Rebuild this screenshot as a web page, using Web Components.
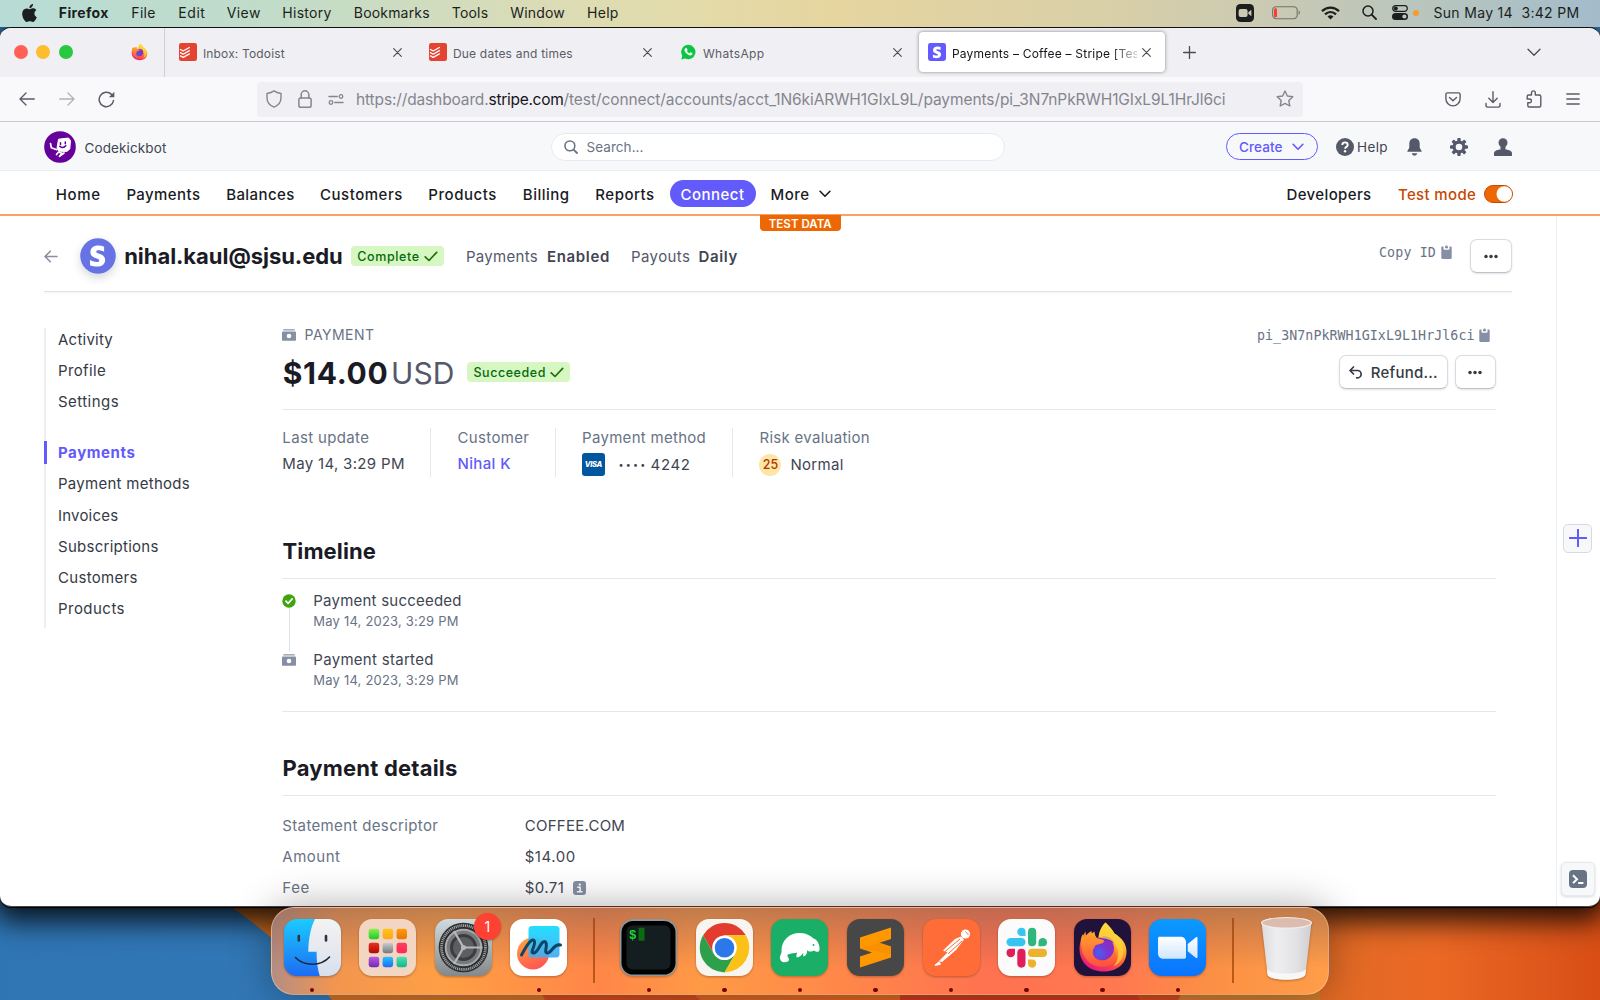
<!DOCTYPE html>
<html lang="en">
<head>
<meta charset="utf-8">
<title>Payments – Coffee – Stripe [Test]</title>
<style>
html,body{margin:0;height:1000px;width:1600px;overflow:hidden}
body{font-family:Inter,"Liberation Sans",sans-serif;color:#414552;font-size:15px}
</style>
</head>
<body>
<desk-top>
  <mac-menubar></mac-menubar>
  <browser-window>
    <browser-tabs slot="tabs"></browser-tabs>
    <browser-toolbar slot="toolbar"></browser-toolbar>
    <dash-board></dash-board>
  </browser-window>
  <mac-dock></mac-dock>
</desk-top>
<script>
const svg=(w,h,vb,body,extra='')=>`<svg xmlns="http://www.w3.org/2000/svg" width="${w}" height="${h}" viewBox="${vb}" fill="none" ${extra}>${body}</svg>`;
const line='stroke="currentColor" stroke-linecap="round" stroke-linejoin="round"';
const firefoxArt=`<defs>
<linearGradient id="ffa" x1=".8" y1="0" x2=".25" y2="1"><stop offset="0" stop-color="#fff14a"/><stop offset=".35" stop-color="#ffb52e"/><stop offset=".62" stop-color="#ff5a36"/><stop offset="1" stop-color="#e3128b"/></linearGradient>
<radialGradient id="ffb" cx=".35" cy=".7" r=".8"><stop offset="0" stop-color="#4a5cf0"/><stop offset=".5" stop-color="#7a35cf"/><stop offset="1" stop-color="#a026b4"/></radialGradient>
<linearGradient id="ffc" x1="0" y1="0" x2="0" y2="1"><stop offset="0" stop-color="#ffa62b"/><stop offset="1" stop-color="#ff4f3f"/></linearGradient></defs>
<path d="M28 2C31 5 34 8 37 13C44 17 49 23 49 31C49 44 39 51 26 51C12 51 2 42 2 28C2 22 4 17 8 11C8 14 9 16 10 17C12 15 14 13 17 11C17 14 18 16 20 18L21 17C22 10 24 6 28 2Z" fill="url(#ffa)"/>
<circle cx="25" cy="28" r="11.5" fill="url(#ffb)"/>
<path d="M5 14C6 15 6.500 16 7 17C9 14 11 12 14 10.500C14 13 15 15 17 17L26 19.500C27 21 26 22.500 24 23C21 24 17 24 17 27C14 30 15 37 20 39.500C25 42 34 40 37 30C40 36 39 42 31 45C18 50 5 40 4 27C3 21 3 18 5 14Z" fill="url(#ffc)"/>
<path d="M25 16C30 15 35 18 37 23C34 21 31 20 28 20Z" fill="#6a2cc4"/>
<path d="M28 2C31 5 34 8 37 13C43 17 46 23 46 31C46 38 42 43 36 46C42 39 42 30 37 23C33 18 26 18 21 17C22 10 24 6 28 2Z" fill="#ffd43b" opacity=".75"/>`;
const todoist=svg(18,18,'0 0 18 18','<rect width="18" height="18" rx="2.2" fill="#e44332"/><g stroke="#fff" stroke-width="1.3" stroke-linejoin="round"><path d="M1 6.2L4.2 8L10.8 4.2M1 9.4L4.2 11.2L10.8 7.4M1 12.6L4.2 14.4L10.8 10.6"/></g>');
const ICONS={
apple:svg(15,18,'3.9 2 16.2 20','<path fill="#1c1e1e" d="M18.71 19.5c-.83 1.24-1.71 2.45-3.05 2.47-1.34.03-1.77-.79-3.29-.79-1.53 0-2 .77-3.27.82-1.31.05-2.3-1.32-3.14-2.53C4.25 17 2.94 12.45 4.7 9.39c.87-1.52 2.43-2.48 4.12-2.51 1.28-.02 2.5.87 3.29.87.78 0 2.26-1.07 3.81-.91.65.03 2.47.26 3.64 1.98-.09.06-2.17 1.28-2.15 3.81.03 3.02 2.65 4.03 2.68 4.04-.03.07-.42 1.44-1.38 2.83M13 3.5c.73-.83 1.94-1.46 2.94-1.5.13 1.17-.34 2.35-1.04 3.19-.69.85-1.83 1.51-2.95 1.42-.15-1.15.41-2.35 1.05-3.11z"/>'),
record:svg(18,18,'0 0 18 18','<rect width="18" height="18" rx="4.5" fill="#1c1e1e"/><rect x="2.600" y="5" width="9" height="8" rx="2" fill="#c9c9b4"/><path d="M12.300 8.3L15.400 5.800v6.400l-3.100-2.500z" fill="#c9c9b4"/>'),
battery:svg(29,14,'0 0 29 14','<rect x=".6" y=".7" width="24.6" height="12" rx="3.6" stroke="#6f7468" stroke-width="1.1"/><rect x="2" y="2.2" width="3" height="9" rx="1.2" fill="#ff3b30"/><path d="M26.6 4.6c1.8.6 1.8 3.6 0 4.2z" fill="#6f7468"/>'),
wifi:svg(19,14,'0 0 19 14','<g stroke="#1c1e1e" stroke-width="2.3"><path d="M1 5.2C6 .4 13 .4 18 5.2M4 8.3c3.3-3 7.700-3 11 0"/></g><path d="M9.500 13.600L6.500 10.600a4.300 4.300 0 0 1 6 0z" fill="#1c1e1e"/>'),
spot:svg(15,15,'0 0 15 15','<circle cx="6" cy="6" r="5" stroke="#1c1e1e" stroke-width="1.500"/><path d="M9.700 9.700L14 14" stroke="#1c1e1e" stroke-width="1.800" stroke-linecap="round"/>'),
control:svg(16,15,'0 0 16 15','<rect x=".7" y=".7" width="14.600" height="5.600" rx="2.800" stroke="#1c1e1e" stroke-width="1.200"/><circle cx="3.800" cy="3.500" r="2" fill="#1c1e1e"/><rect y="8" width="16" height="7" rx="3.500" fill="#1c1e1e"/><circle cx="12.400" cy="11.500" r="2.100" fill="#b8c4bc"/>'),
firefox:svg(17,18,'0 0 51 53',firefoxArt),
todoist,
whatsapp:svg(15,16,'0 0 24 25','<path d="M12 1a11.500 11.500 0 1 1-5.500 21.800L.5 24.500L2 18.400A11.500 11.500 0 0 1 12 1z" fill="#0ac443"/><path fill="#fff" d="M17.472 14.382c-.297-.149-1.758-.867-2.030-.967-.273-.099-.471-.148-.67.15-.197.297-.767.966-.94 1.164-.173.199-.347.223-.644.075-.297-.15-1.255-.463-2.390-1.475-.883-.788-1.480-1.761-1.653-2.059-.173-.297-.018-.458.13-.606.134-.133.298-.347.446-.52.149-.174.198-.298.298-.497.099-.198.05-.371-.025-.52-.075-.149-.669-1.612-.916-2.207-.242-.579-.487-.5-.669-.51-.173-.008-.371-.01-.57-.01-.198 0-.52.074-.792.372-.272.297-1.040 1.016-1.040 2.479 0 1.462 1.065 2.875 1.213 3.074.149.198 2.096 3.200 5.077 4.487.709.306 1.262.489 1.694.625.712.227 1.360.195 1.871.118.571-.085 1.758-.719 2.006-1.413.248-.694.248-1.289.173-1.413-.074-.124-.272-.198-.57-.347" stroke="#fff" stroke-width=".8"/>'),
stripe:svg(18,18,'0 0 18 18','<rect width="18" height="18" rx="2.400" fill="#635bff"/><path fill="#fff" d="M8.200 7c0-.6.5-.8 1.200-.8 1 0 2.200.3 3.200.85V4.050A8.500 8.500 0 0 0 9.400 3.450C6.700 3.450 5 4.850 5 7.150c0 3.600 4.900 3 4.900 4.550 0 .7-.6.9-1.400.9-1.200 0-2.600-.5-3.600-1.100v3c1.200.5 2.500.8 3.600.8 2.700 0 4.600-1.300 4.600-3.700C13.100 7.800 8.200 8.500 8.200 7z"/>'),
close:svg(9,9,'0 0 9 9',`<path d="M.7.7l7.600 7.600M8.300.7L.7 8.300" ${line} stroke-width="1.150"/>`),
plus:svg(13,13,'0 0 13 13',`<path d="M6.500.6v11.800M.6 6.500h11.800" ${line} stroke-width="1.300"/>`),
down:svg(14,9,'0 0 14 9',`<path d="M1 1.200l6 6 6-6" ${line} stroke-width="1.300"/>`),
back:svg(16,14,'0 0 16 14',`<path d="M7 1L1 7l6 6M1.200 7H15.300" ${line} stroke-width="1.400"/>`),
fwd:svg(16,14,'0 0 16 14',`<path d="M9 1l6 6-6 6M14.800 7H.7" ${line} stroke-width="1.300"/>`),
reload:svg(17,17,'0 0 17 17',`<path d="M15.500 9.500A7.200 7.200 0 1 1 13.500 3.400L15 4.800" ${line} stroke-width="1.500"/><path d="M16.300.8v5.400h-5.400z" fill="currentColor"/>`),
shield:svg(16,18,'0 0 16 18',`<path d="M8 .9c2 1.400 4.500 2.200 7 2.600v4.300c0 4.200-2.600 7.600-7 9.300-4.400-1.700-7-5.100-7-9.300V3.500C3.500 3.100 6 2.300 8 .9z" ${line} stroke-width="1.400"/>`),
lock:svg(14,18,'0 0 14 18',`<rect x=".9" y="8" width="12.200" height="9.200" rx="1.800" ${line} stroke-width="1.500"/><path d="M3.200 8V4.600a3.800 3.800 0 0 1 7.600 0V8" ${line} stroke-width="1.500"/>`),
perms:svg(16,11,'0 0 16 11',`<path d="M1 2.500h8.200M15 8.500H6.800" ${line} stroke-width="1.500"/><circle cx="13" cy="2.500" r="1.800" ${line} stroke-width="1.300"/><circle cx="3" cy="8.500" r="1.800" ${line} stroke-width="1.300"/>`),
star:svg(18,18,'0 0 18 18',`<path d="M9 1l2.350 5 5.450.7-4 3.800 1 5.500L9 13.350 4.200 16l1-5.500-4-3.800 5.450-.7z" ${line} stroke-width="1.400"/>`),
pocket:svg(16,15,'0 0 16 15',`<path d="M2.500.9h11c.9 0 1.600.7 1.600 1.600v4.300a7.100 7.100 0 0 1-14.200 0V2.500C.9 1.600 1.600.9 2.500.9zM4.500 5.500L8 8.800l3.500-3.300" ${line} stroke-width="1.400"/>`),
download:svg(16,17,'0 0 16 17',`<path d="M8 .8v10.500M3.800 7.300L8 11.400l4.200-4.100M1 12.500v1.800c0 1 .8 1.800 1.800 1.800h10.400c1 0 1.800-.8 1.800-1.800v-1.800" ${line} stroke-width="1.400"/>`),
puzzle:svg(16,18,'0 0 16 18',`<path d="M2.500 5h3V2.800a1.900 1.900 0 0 1 3.800 0V5h4c.8 0 1.500.7 1.500 1.500v9c0 .8-.7 1.500-1.500 1.500h-10c-.8 0-1.500-.7-1.500-1.500v-2.700H3.500a1.900 1.900 0 0 0 0-3.800H1.200V6.500C1.200 5.700 1.700 5 2.500 5z" ${line} stroke-width="1.400"/>`),
burger:svg(14,12,'0 0 14 12',`<path d="M.8 1h12.400M.8 6h12.400M.8 11h12.400" ${line} stroke-width="1.300"/>`),
bot:svg(32,32,'0 0 32 32','<circle cx="16" cy="16" r="15.800" fill="#65009b"/><path d="M14.500 8.200L24.500 7l2 2.500-.7 8.500-3 2.500-7.800-.3-2-3z" fill="#fff" stroke="#fff" stroke-linejoin="round"/><path d="M16.500 11.800v1.700M21.300 11v1.700M15.800 15.300c2 1.500 4.500 1.200 6-.5" stroke="#65009b" stroke-width="1.500" stroke-linecap="round"/><path d="M6.500 12.500l.8 4.200 5.500 2M12.500 23.500l2-2.500 3.500 1.300-2.500 3 4.500-3.300" stroke="#fff" stroke-width="1.700" stroke-linecap="round" stroke-linejoin="round"/>'),
search:svg(14,14,'0 0 14 14','<circle cx="5.900" cy="5.900" r="4.900" stroke="#687385" stroke-width="1.600"/><path d="M9.600 9.600L13 13" stroke="#687385" stroke-width="1.800" stroke-linecap="round"/>'),
chev:svg(12,8,'0 0 12 8',`<path d="M1.100 1.300L6 6.300l4.900-5" ${line} stroke-width="1.600"/>`),
help:svg(18,18,'0 0 18 18','<circle cx="9" cy="9" r="9" fill="#545969"/><path d="M6.300 6.900C6.300 5.400 7.500 4.400 9 4.400s2.700 1 2.700 2.500c0 2-2.600 1.900-2.600 3.800" stroke="#fff" stroke-width="1.900"/><circle cx="9.100" cy="13.300" r="1.200" fill="#fff"/>'),
bell:svg(15,18,'0 0 15 18','<path d="M7.500.3C4.300.3 2.300 2.600 2.300 5.500v3.800C2.300 11 .3 12 .3 13.700h14.400c0-1.700-2-2.700-2-4.400V5.500c0-2.900-2-5.200-5.200-5.200zM4.800 15.200h5.400c-.3 1.500-1.400 2.400-2.700 2.400s-2.400-.9-2.700-2.400z" fill="#545969"/>'),
gear:svg(18,18,'-9 -9 18 18','<g fill="#545969">'+[0,45,90,135].map(a=>`<rect x="-1.700" y="-9" width="3.400" height="18" rx=".9" transform="rotate(${a})"/>`).join('')+'<circle r="6.500"/></g><circle r="3.300" fill="#f7f8fa"/>'),
person:svg(18,18,'0 0 18 18','<circle cx="9" cy="4.700" r="4.500" fill="#545969"/><path d="M0 17.500v-2.300c0-2.300 3.700-3.900 9-3.900s9 1.600 9 3.900v2.300c0 .3-.2.5-.5.5H.5c-.3 0-.5-.2-.5-.5zM6.500 8h5v4h-5z" fill="#545969"/>'),
toggle:svg(29,18,'0 0 29 18','<rect x=".5" y=".5" width="28" height="17" rx="8.500" fill="#ed6804" stroke="#c84801"/><circle cx="20.300" cy="9" r="7.800" fill="#fff"/>'),
arrow:svg(14,13,'0 0 14 13',`<path d="M6.300 1.200L1 6.500l5.300 5.300M1.200 6.500H13" ${line} stroke-width="1.600"/>`),
acct:svg(36,36,'0 0 36 36','<circle cx="18" cy="18" r="17.800" fill="#6772e5"/><path fill="#fff" d="M16.300 13.700c0-1 .8-1.400 2-1.400 1.800 0 4 .5 5.800 1.500V8.700a15 15 0 0 0-5.800-1.100c-4.800 0-7.900 2.500-7.900 6.700 0 6.500 8.900 5.400 8.900 8.200 0 1.200-1 1.600-2.400 1.600-2.100 0-4.800-.9-6.900-2v5.100c2.300 1 4.700 1.400 6.900 1.400 4.900 0 8.200-2.300 8.200-6.600-.1-7-8.800-5.700-8.800-8.300z"/>'),
check:svg(14,11,'0 0 14 11','<path d="M1.200 5.800L5 9.500 12.700 1.300" stroke="#217005" stroke-width="1.700" stroke-linecap="round" stroke-linejoin="round"/>'),
clip:svg(11,14,'0 0 11 14','<path d="M.3 2.600c0-.6.400-1 1-1h1.200v2.200c0 .5.400.900.900.900h4.200c.5 0 .9-.4.900-.9v-2.200h1.200c.6 0 1 .4 1 1V13c0 .5-.4.900-1 .900H1.300c-.6 0-1-.4-1-.9z" fill="#878fa4"/><path d="M4 3.300V1.900h.1a1.400 1.400 0 0 1 2.800 0H7v1.400z" fill="#878fa4"/>'),
dots:svg(14,5,'0 0 14 5','<g fill="#353a44"><circle cx="2" cy="2.500" r="1.750"/><circle cx="7" cy="2.500" r="1.750"/><circle cx="12" cy="2.500" r="1.750"/></g>'),
cash:svg(14,12,'0 0 14 12','<path d="M1.300 0h11.400v1.600H1.300z" fill="#a3acba"/><rect y="2.400" width="14" height="9.300" rx=".8" fill="#878fa4"/><circle cx="7" cy="7" r="2.300" fill="#fff"/>'),
refund:svg(13,13,'0 0 13 13',`<path d="M4.500 1L1 4.500 4.500 8M1.200 4.500h7.300a3.600 3.600 0 0 1 0 7.300H7.700" ${line} stroke-width="1.700"/>`),
ok:svg(14,14,'0 0 14 14','<circle cx="7" cy="7" r="6.700" fill="#3fa40d"/><path d="M4 7.200l2.100 2.100 4-4.300" stroke="#fff" stroke-width="1.800" stroke-linecap="round" stroke-linejoin="round"/>'),
info:svg(13,14,'0 0 13 14','<rect width="13" height="14" rx="3" fill="#878fa4"/><path d="M4.200 6.300h2.900v4.400M3.900 10.700h5.600" stroke="#fff" stroke-width="1.500"/><circle cx="6.800" cy="3.600" r="1.150" fill="#fff"/>'),
add:svg(18,18,'0 0 18 18','<path d="M9 .7v16.600M.7 9h16.600" stroke="#625afa" stroke-width="2" stroke-linecap="round"/>'),
term:svg(18,18,'0 0 18 18','<rect width="18" height="18" rx="4" fill="#687385"/><path d="M4 5.300l4 3.900-4 3.900" stroke="#fff" stroke-width="2"/><path d="M9.200 13h5.200" stroke="#fff" stroke-width="2"/>')
};
const app=(body)=>svg(57,57,'0 0 57 57',body);
const tile=(f)=>`<rect width="57" height="57" rx="13" fill="${f}"/>`;
const APPS={
finder:app(`<defs><linearGradient id="a" x1="0" y1="0" x2="0" y2="1"><stop stop-color="#1bcbff"/><stop offset="1" stop-color="#1d6cf3"/></linearGradient><linearGradient id="b" x1="0" y1="0" x2="0" y2="1"><stop stop-color="#f4f3f3"/><stop offset="1" stop-color="#d8dfec"/></linearGradient><clipPath id="c"><rect width="57" height="57" rx="13"/></clipPath></defs><g clip-path="url(#c)"><path d="M0 0h57v57H0z" fill="url(#a)"/><path d="M31 0C26.500 9 24.500 20 24.300 32.800H32.600C32.500 42 33.500 50 35.800 57H57V0z" fill="url(#b)"/></g><path d="M14.800 17v4.500M42 17v4.500" stroke="#2b3440" stroke-width="2.600" stroke-linecap="round"/><path d="M11.500 38.500C20 47.500 37 47.500 45.500 38" stroke="#1d2838" stroke-width="1.600" stroke-linecap="round"/>`),
launchpad:app(tile('#f2d6c2')+[['#8bf04e','#22c928'],['#ffc516','#ffa51f'],['#ff9d0a','#e9730a'],['#f0301c','#a80c0c'],['#c9ced3','#74797d'],['#ff3f5f','#ff2a55'],['#b65be0','#7328b8'],['#27c2ff','#1a6df5'],['#4ee0b8','#10b78a']].map((c,i)=>`<linearGradient id="l${i}" x1="0" y1="0" x2="0" y2="1"><stop stop-color="${c[0]}"/><stop offset="1" stop-color="${c[1]}"/></linearGradient><rect x="${9.700+(i%3)*13.900}" y="${9.700+Math.floor(i/3)*14}" width="10.500" height="10.500" rx="2.400" fill="url(#l${i})"/>`).join('')),
settings:app(`<linearGradient id="g" x1="0" y1="0" x2="0" y2="1"><stop stop-color="#cfdbe0"/><stop offset="1" stop-color="#85888a"/></linearGradient>${tile('url(#g)')}<circle cx="28.500" cy="28.500" r="24.800" fill="#2c2d2e"/><circle cx="28.500" cy="28.500" r="22" stroke="#a2a5a7" stroke-width="2.800" stroke-dasharray="1.100 .8"/><circle cx="28.500" cy="28.500" r="17.800" fill="#77797b" stroke="#a9acae" stroke-width="2"/><circle cx="28.500" cy="28.500" r="12" fill="#5c5e61" stroke="#3a3c3e" stroke-width="3"/><path d="M28.500 28.500h19M28.500 28.500L19 12M28.500 28.500L19 45" stroke="#b6b9bb" stroke-width="2.200"/><circle cx="28.500" cy="28.500" r="2.500" fill="#b6b9bb"/>`),
freeform:app(`<linearGradient id="f" x1="0" y1="0" x2="0" y2="1"><stop stop-color="#12dcff"/><stop offset="1" stop-color="#4aa8f0"/></linearGradient><linearGradient id="f2" x1="0" y1="0" x2=".4" y2="1"><stop stop-color="#ffa73a"/><stop offset="1" stop-color="#ff5a52"/></linearGradient>${tile('#fff')}<circle cx="23" cy="34.500" r="16" fill="url(#f2)"/><rect x="18.500" y="7" width="31" height="31.500" rx="3.500" fill="url(#f)" opacity=".93"/><path d="M11.500 36C16 28 21 19 24 21.500C27 25 19 34 23.500 34C28.500 34 31 20 35.500 23C38.500 26 33 34 37.500 34C42 34 43 24.500 50.500 26" stroke="#0b4668" stroke-width="3" stroke-linecap="round"/>`),
terminal:app('<rect width="57" height="57" rx="13" fill="#8c989c"/><rect x="1.500" y="2" width="54" height="53.500" rx="11.500" fill="#000"/><rect x="6.500" y="6.500" width="44" height="44" rx="6" fill="#141e20"/><rect x="18.500" y="8.700" width="6" height="13" fill="#0a6b12"/><text x="9" y="20" font-family="Liberation Mono,monospace" font-weight="700" font-size="12.500" fill="#19e02a">$</text>'),
chrome:app(tile('#f8f4ef')+'<g transform="translate(28.500 28.700)"><path d="M-21.400 -12.400A24.700 24.700 0 0 1 21.400 -12.400L0 -12.400L-10.700 6.200z" fill="#e33b2e"/><path d="M-21.400 -12.400A24.700 24.700 0 0 0 0 24.700L10.700 6.200L-10.700 6.200z" fill="#2da04b"/><path d="M21.400 -12.400A24.700 24.700 0 0 1 0 24.700L10.700 6.200L0 -12.400z" fill="#fbc116"/><circle r="12.300" fill="#fff"/><circle r="9.800" fill="#2a78ea"/></g>'),
manatee:app(tile('#1aae66')+'<path d="M9.500 41C7.500 37 11 35.500 10.500 31.500C10.500 21 19 13.500 29.500 14C36 14.200 39.500 17 42.500 19.500C46.500 20.500 49 26 48.500 31C48.200 33.500 45 33 43 31.500C40.500 33.500 37 32.500 36 31C36.500 34 35 37 32.500 37.500C32 36 32 34.500 32.500 33.500C31 36 28.500 38.500 25.500 38.500C25 35 26.500 33.500 26.500 33.500C23.500 34.500 20 34 17 35.500C15 37 18.500 39 18 41C17 43.500 11 44.500 9.500 41z" fill="#fff"/><circle cx="42.500" cy="26" r=".9" fill="#1aae66"/>'),
sublime:app(tile('#474747')+'<path d="M13 18.500L44 8.500v11.500L32.500 23.700L44 27.500v11L13 48.500V37.500L25 33.500L13 29.500z" fill="#ff9800"/><path d="M13 29.500L32.500 23.700L44 27.500V35z" fill="#f58a00" opacity=".6"/>'),
postman:app(tile('#ff6c37')+'<g fill="#fff"><circle cx="42.500" cy="15" r="4.600"/><path d="M38 17.500L41 20.500L33 31L19 43L16 42L24.500 33.500L20 31.500L32 20z"/><path d="M16.500 42l1.500 3.500-5.500 1.500-1-1z"/></g><path d="M37 20L22 32.500M39 22L25 35M42.500 12.500l3 3.500" stroke="#ff6c37" stroke-width="1"/>'),
slack:app(tile('#fbfbfb')+'<g fill="#36c5f0"><rect x="8.500" y="19" width="19" height="8.300" rx="4.150"/><path d="M23.400 8.700a4.100 4.100 0 0 1 4.100 4.100v4.200h-4.100a4.150 4.150 0 0 1 0-8.300z"/></g><g fill="#2eb67d"><rect x="30" y="8.700" width="8.200" height="18.600" rx="4.100"/><path d="M49 23.200a4.100 4.100 0 0 1-4.100 4.100h-4.400v-4.100a4.250 4.250 0 0 1 8.500 0z"/></g><g fill="#ecb22e"><rect x="30" y="29.800" width="19" height="8.200" rx="4.100"/><path d="M34.100 48.700a4.100 4.100 0 0 1-4.100-4.100v-4.200h4.100a4.150 4.150 0 0 1 0 8.300z"/></g><g fill="#e01e5a"><rect x="19.300" y="29.800" width="8.200" height="18.900" rx="4.100"/><path d="M8.500 33.900a4.100 4.100 0 0 1 4.100-4.100H17v4.100a4.250 4.250 0 0 1-8.500 0z"/></g>'),
firefox:app(tile('#21123c')+`<g transform="translate(3.500 1.500)">${firefoxArt}</g>`),
zoom:app(`<linearGradient id="z" x1="0" y1="0" x2="0" y2="1"><stop stop-color="#0b9aff"/><stop offset="1" stop-color="#0a74ff"/></linearGradient><linearGradient id="z2" x1="0" y1="0" x2="0" y2="1"><stop stop-color="#fff"/><stop offset="1" stop-color="#cfe6ff"/></linearGradient>${tile('url(#z)')}<path d="M9 19.300c0-.9.700-1.600 1.600-1.600h20.800c3.400 0 5.600 2.200 5.600 5.500v14.900c0 .9-.7 1.600-1.600 1.600H14.500c-3.400 0-5.500-2.200-5.500-5.500zM38.700 25l8-6.600c1-.8 1.800-.5 1.800.7v19c0 1.200-.8 1.500-1.800.7l-8-6.600z" fill="url(#z2)"/>`),
trash:svg(57,66,'0 -3 57 66','<defs><linearGradient id="t" x1="0" y1="0" x2="1" y2="0"><stop stop-color="#dcdcde"/><stop offset=".3" stop-color="#eeeef0"/><stop offset=".7" stop-color="#e2e2e4"/><stop offset="1" stop-color="#cfcfd3"/></linearGradient></defs><path d="M3.500 3.500L9.500 55C10 62 47 62 47.500 55L53.500 3.500z" fill="url(#t)"/><path d="M9 50c3 6 36 6 39 0l-.6 5.500c-1 7-37 7-38 0z" fill="#f7f7f8"/><ellipse cx="28.500" cy="3.800" rx="25" ry="5.300" fill="#dcbcae" stroke="#f0ecea" stroke-width="1.200"/>')
};
const define=(name,css,html)=>customElements.define(name,class extends HTMLElement{
  constructor(){super();const t=document.createElement('template');
    t.innerHTML=`<style>*{box-sizing:border-box}:host{box-sizing:border-box;display:flex}svg{display:block;flex:none}${css}</style>${html}`;
    this.attachShadow({mode:'open'}).append(t.content.cloneNode(true));}
});
const T=(w,s,ml=0,cls='')=>`<fit-text w="${w}" class="${cls}" style="margin-left:${ml}px">${s}</fit-text>`;
const I=(n,ml=0)=>`<ui-icon name="${n}" style="margin-left:${ml}px"></ui-icon>`;

define('desk-top',`:host{flex-direction:column;width:1600px;height:1000px;position:relative;overflow:hidden}.wall{position:absolute;inset:0;z-index:-1}`,
`<div class="wall">${svg(1600,1000,'0 0 1600 1000',`<defs><linearGradient id="w" x1="0" x2="1"><stop offset="0" stop-color="#2f75b4"/><stop offset="1" stop-color="#3c7fb8"/></linearGradient><linearGradient id="o" gradientUnits="userSpaceOnUse" x1="1300" y1="0" x2="1600" y2="0"><stop stop-color="#de6b26"/><stop offset=".45" stop-color="#ea6824"/><stop offset="1" stop-color="#d84e16"/></linearGradient></defs>
<rect width="1600" height="1000" fill="url(#w)"/>
<path d="M215 896C260 925 300 960 332 1000H1600V880H215z" fill="#cf6f25"/>
<path d="M540 990L545 1000H1180V960H540z" fill="#cc4a1b"/><path d="M690 990L700 1000H1000V980H690z" fill="#d9641f"/><path d="M900 980h230l10 20H900z" fill="#c63a19"/><path d="M1190 980h170v20h-182z" fill="#cb7a2c"/><rect x="1320" y="850" width="280" height="150" fill="url(#o)"/>`)}</div><slot></slot>`);

define('mac-menubar',`:host{height:27px;flex:none;position:relative;z-index:1;align-items:center;padding:0 0 2px 22px;color:#1c1e1e;font-size:14px;background:linear-gradient(90deg,#b7dcd5,#c2dcc8 18%,#dbdcb6 34%,#e3dbaa 43%,#e6d59f 52%,#d8cfa8 70%,#c9c9b4 80%,#b6c5be 90%,#a3bccb)}b{font-weight:700}`,
I('apple')+'<b>'+T(50,'Firefox',21.800)+'</b>'+T(24.500,'File',22.500)+T(27.200,'Edit',22.500)+T(34,'View',21.300)+T(49.500,'History',21.500)+T(76,'Bookmarks',22)+T(36.500,'Tools',22)+T(54.500,'Window',22)+T(31.500,'Help',22.300)+
I('record',617.700)+I('battery',17.500)+I('wifi',20.700)+I('spot',21.500)+I('control',15.500)+'<span style="width:6px;height:6px;border-radius:50%;background:#f79a2d;margin-left:5px"></span>'+T(146,'Sun May 14&nbsp; 3:42 PM',14,'clock'));

define('browser-window',`:host{flex-direction:column;height:880px;border-top:1px solid #111;border-bottom:1.500px solid #4a4442;border-radius:11px;overflow:hidden;background:#fff;flex:none;position:relative;box-shadow:0 8px 28px 6px rgba(0,0,0,.85),0 1px 1px #000}`,
`<slot name="tabs"></slot><slot name="toolbar"></slot><slot></slot>`);

define('browser-tab',`:host{width:250px;height:49px;align-items:center;padding:0 17px 0 10px;color:#5b5b66;font-size:12px;flex:none}
:host([active]){width:246px;height:40px;background:#fff;border-radius:4px;box-shadow:0 0 3px 1px rgba(120,120,130,.55);padding:0 13.500px 0 9px;color:#15141a}.t{flex:1;overflow:hidden;padding-top:2px;margin-left:6px}.x{color:#4a4a52;display:flex}:host([active]) .t{margin-right:5px;-webkit-mask:linear-gradient(90deg,#000 86%,rgba(0,0,0,.2));margin-left:6px}`,
`<slot name="i"></slot><div class="t"><slot></slot></div><span class="x">${I('close')}</span>`);

define('browser-tabs',`:host{height:49px;background:#f0f0f4;align-items:center;padding:0 0 1px 14px;color:#4a4a52}i{width:14px;height:14px;border-radius:50%;margin-right:8.300px}.sep{width:1.500px;height:49px;background:#cfcfd4;margin:0 3.500px 0 15.500px}`,
`<i style="background:#ff5f57"></i><i style="background:#febc2e"></i><i style="background:#28c840"></i>${I('firefox',50.500)}<span class="sep"></span>
<browser-tab>${I('todoist').replace('style','slot="i" style')}${T(82,'Inbox: Todoist')}</browser-tab>
<browser-tab>${I('todoist').replace('style','slot="i" style')}${T(120,'Due dates and times')}</browser-tab>
<browser-tab>${I('whatsapp',2).replace('style','slot="i" style')}${T(61.500,'WhatsApp',1)}</browser-tab>
<browser-tab active>${I('stripe').replace('style','slot="i" style')}${T(196,'Payments – Coffee – Stripe [Test]')}</browser-tab>${I('plus',18)}${I('down',331)}`);

define('browser-toolbar',`:host{height:45px;background:#f9f9fb;border-bottom:1.500px solid #c9c9ce;align-items:center;padding-left:18.500px;color:#5b5b66}
.url{display:flex;align-items:center;width:1045.500px;height:35px;background:#f0f0f4;border-radius:4px;margin-left:142px;padding-left:9px;font-size:15.500px;color:#85858e}.url b{font-weight:400;color:#15141a;display:flex}`,
I('back')+`<span style="opacity:.45">${I('fwd',24.500)}</span>`+I('reload',23)+`<div class="url">${I('shield')+I('lock',16)+I('perms',16)+T(132.500,'https://dashboard.',12)}<b>${T(75,'stripe.com')}</b>${T(662,'/test/connect/accounts/acct_1N6kiARWH1GIxL9L/payments/pi_3N7nPkRWH1GIxL9L1HrJl6ci')+I('star',50.500)}</div>`+I('pocket',142.500)+I('download',23.500)+I('puzzle',25)+I('burger',24.500));

define('stripe-topbar',`:host{height:49px;background:#f7f8fa;border-bottom:1px solid #ebeef1;align-items:center;padding:1px 0 0 44px;font-size:13.500px;color:#414552}
.s{display:flex;align-items:center;width:454px;height:28px;border:1px solid #e6e9ee;border-radius:14px;background:#fff;margin-left:384.500px;padding-left:12px;color:#687385}
.c{display:flex;align-items:center;width:92px;height:27px;border:1px solid #625afa;border-radius:14px;color:#625afa;margin-left:220.500px;padding-left:12.500px;font-weight:500}.n{padding-top:2px}`,
I('bot')+T(82,'Codekickbot',8.500,'n')+`<div class="s">${I('search')+T(57,'Search...',8.500)}</div><div class="c">${T(43.500,'Create')+I('chev',9)}</div>`+I('help',18)+T(31,'Help',3.500,'m')+I('bell',18.500)+I('gear',28)+I('person',26));

define('stripe-nav',`:host{height:45px;border-bottom:2px solid #f8a263;align-items:center;padding:2px 0 0 55.800px;font-size:15px;font-weight:500;color:#1a1b25;position:relative}
fit-text{padding-top:1px}
.p{display:flex;align-items:center;justify-content:center;width:86px;height:27px;border-radius:14px;background:#625afa;color:#fff;margin-left:15px}.o{color:#c84801}
.td{position:absolute;left:759.500px;top:44px;width:81.500px;height:16px;background:#ed6804;border-radius:0 0 4px 4px;display:flex;align-items:center;justify-content:center;color:#fff;font-size:11.500px;font-weight:600;padding-top:1px}`,
T(45,'Home')+T(74,'Payments',25.600)+T(68.500,'Balances',25.800)+T(82.700,'Customers',25.400)+T(68.400,'Products',25.600)+T(46.700,'Billing',26.100)+T(59.200,'Reports',25.800)+`<div class="p">${T(64,'Connect')}</div>`+T(39,'More',15)+I('chev',9)+T(85,'Developers',456)+T(78.300,'Test mode',26.400,'o')+I('toggle',7.300)+`<div class="td">${T(63,'TEST DATA')}</div>`);

define('status-badge',`:host{height:19.500px;width:var(--w);background:#d7f7c2;border-radius:4px;align-items:center;padding-left:6.500px;color:#05690d;font-size:12.500px;font-weight:500;flex:none}`,`<slot></slot>${I('check',4.500)}`);
define('push-button',`:host{width:var(--w);height:33.500px;border:1px solid #d8dbe2;border-bottom-color:#bfc2ca;border-radius:7px;background:#fff;box-shadow:0 1px 2px rgba(60,66,87,.15);align-items:center;justify-content:center;color:#353a44;font-weight:500;flex:none}`,`<slot></slot>`);

define('account-header',`:host{height:76px;border-bottom:1px solid #dfe4ea;box-shadow:0 2px 2px -1px rgba(200,208,220,.3);margin:0 0 0 44px;width:1467.600px;align-items:center;padding-top:5px;color:#545969;font-size:15px}
.a{color:#878fa4;display:flex}.av{border-radius:50%;box-shadow:0 4px 8px rgba(60,66,87,.2);margin-left:21.500px}.h{font-size:22px;font-weight:700;color:#1a1b25;margin-top:-1px}.b{font-weight:600;color:#414552}.n{padding-top:1px}.mono{font:13.300px "DejaVu Sans Mono",monospace;color:#687385}.id{display:flex;align-items:center;margin:0 0 8px 641px}`,
`<span class="a">${I('arrow')}</span><span class="av">${I('acct')}</span>`+T(218.500,'nihal.kaul@sjsu.edu',8.700,'h')+`<status-badge style="--w:93px;margin-left:8px">${T(62.500,'Complete')}</status-badge>`+T(72,'Payments',22.300,'n')+T(63,'Enabled',9,'b n')+T(59.400,'Payouts',21,'n')+T(39.500,'Daily',8.100,'b n')+`<span class="id">${T(57,'Copy ID',0,'mono')+I('clip',5.500)}</span><push-button style="--w:41.700px;margin-left:17.500px">${I('dots')}</push-button>`);

define('side-menu',`:host{flex-direction:column;width:238px;height:300px;margin:36px 0 0 44px;border-left:2px solid #ebeff4;color:#353a44;flex:none}
div{height:31.150px;display:flex;align-items:center;padding-left:12px}div:first-of-type{margin-top:-4px}.g{margin-bottom:19.800px}.on{color:#625afa;font-weight:700;position:relative}.on:before{content:"";position:absolute;left:-2px;top:4px;width:3px;height:22.500px;background:#625afa}`,
[['Activity',55],['Profile',48],['Settings',61,'g'],['Payments',77.500,'on'],['Payment methods',132],['Invoices',60.300],['Subscriptions',100.700],['Customers',79.700],['Products',67]].map(a=>`<div class="${a[2]||''}">${T(a[1],a[0])}</div>`).join(''));

define('payment-summary',`:host{flex-direction:column;color:#687385}.r{display:flex;align-items:center}.r1{height:20px;font-size:14px}.pl{margin-top:-1px}.r2{height:34px;margin-top:10px;margin-bottom:1px}
.mono{font:13.300px "DejaVu Sans Mono",monospace;color:#687385}.amt{font-size:30px;font-weight:700;color:#1a1b25;padding-top:1px}.usd{font-size:30px;color:#545969;font-weight:400;padding-top:1px}
.facts{display:flex;margin-top:19px;border-top:1px solid #e4e8ed;padding-top:18px;font-size:15px}.f{height:49px;border-right:1px solid #e4e8ed;margin-right:26.400px;flex:none}.f:last-child{border:0}.f>div{display:flex;align-items:center;height:19px}.f>div+div{height:22px;margin-top:5.500px;color:#414552}.f>.low{margin-top:6.500px!important}.lk{color:#625afa;font-weight:500}
.visa{width:22.500px;height:22.500px;border-radius:3px;background:#00579f;color:#fff;font:italic 800 7.500px Inter;display:flex;align-items:center;justify-content:center}
.bul{font-size:9px}.risk{width:22px;height:22px;border-radius:50%;background:#fce6a8;color:#b13600;font-size:12.500px;font-weight:500;display:flex;align-items:center;justify-content:center}`,
`<div class="r r1">${I('cash')+T(70,'PAYMENT',8.500,'pl')+T(217.500,'pi_3N7nPkRWH1GIxL9L1HrJl6ci',882.500,'mono')+I('clip',4.800)}</div>
<div class="r r2">${T(105.500,'$14.00',.8,'amt')+T(63.500,'USD',2.700,'usd')}<status-badge style="--w:103px;margin-left:12.500px">${T(72.500,'Succeeded')}</status-badge>
<push-button style="--w:108.400px;margin-left:769.300px">${I('refund')+T(67,'Refund...',8.500)}</push-button><push-button style="--w:41.600px;margin-left:7px">${I('dots')}</push-button></div>
<div class="facts"><div class="f" style="width:149px"><div>${T(87,'Last update',.3)}</div><div>${T(122.500,'May 14, 3:29 PM',.3)}</div></div>
<div class="f" style="width:98.300px"><div>${T(72,'Customer')}</div><div class="lk" style="color:#625afa">${T(53.500,'Nihal K')}</div></div>
<div class="f" style="width:151px"><div>${T(124,'Payment method')}</div><div class="low"><span class="visa">${T(17,'VISA')}</span><span class="bul">${T(29,'••••',14)}</span>${T(40,'4242',3)}</div></div>
<div class="f"><div>${T(110.500,'Risk evaluation')}</div><div class="low"><span class="risk">${T(15.500,'25')}</span>${T(53.200,'Normal',9)}</div></div></div>`);

define('section-title',`:host{height:43px;border-bottom:1px solid #e4e8ed;padding-bottom:12px;align-items:center;font-size:22px;font-weight:700;color:#1a1b25}`,`<slot></slot>`);
define('time-event',`:host{height:59.400px;gap:17.300px}.m{width:14px;display:flex;flex-direction:column;align-items:center;padding-top:3px}:host([cash]) .m{padding-top:4px}.m i{width:1px;flex:1;background:#dfe4ea;margin-bottom:-2px}:host([cash]) i{display:none}.t{height:20px;color:#414552;display:flex;align-items:center;margin-top:-1px}.d{height:22px;font-size:13px;color:#687385;display:flex;align-items:center}`,
`<div class="m"><slot name="i"></slot><i></i></div><div><div class="t"><slot></slot></div><div class="d">${T(145.400,'May 14, 2023, 3:29 PM')}</div></div>`);
define('detail-row',`:host{height:31px;align-items:center;color:#687385}.l{width:242.700px}.v{display:flex;align-items:center;color:#414552}`,`<div class="l"><slot name="l"></slot></div><div class="v"><slot></slot></div>`);
const L=(w,s)=>T(w,s,.3).replace('style','slot="l" style');

define('payment-view',`:host{flex-direction:column;width:1214.300px;padding-top:33px;flex:none}section{border-bottom:1px solid #e4e8ed;height:133px;padding-top:12px}`,
`<payment-summary></payment-summary>
<section-title style="margin-top:59px">${T(93.500,'Timeline',.5)}</section-title>
<section><time-event>${I('ok').replace('style','slot="i" style')}${T(148.400,'Payment succeeded')}</time-event><time-event cash>${I('cash').replace('style','slot="i" style')}${T(120.400,'Payment started')}</time-event></section>
<section-title style="margin-top:41px">${T(175,'Payment details',.5)}</section-title>
<div style="padding-top:14px"><detail-row>${L(156,'Statement descriptor')+T(100.500,'COFFEE.COM')}</detail-row><detail-row>${L(58.200,'Amount')+T(51,'$14.00')}</detail-row><detail-row>${L(27.500,'Fee')+T(39.500,'$0.71')+I('info',8.500)}</detail-row></div>`);

define('tool-rail',`:host{width:44px;border-left:1.500px solid #ebeef1;flex-direction:column;flex:none}div{border:1px solid #d5dbe1;border-radius:5px;background:#f6f8fa;display:flex;align-items:center;justify-content:center}.a{width:29px;height:29px;margin:307.500px 0 0 6px}.b{width:33.500px;height:33.500px;margin:auto 0 10.500px 4px;border-color:#e6e9ee;box-shadow:0 1px 3px rgba(60,66,87,.2)}`,
`<div class="a">${I('add')}</div><div class="b">${I('term')}</div>`);

define('dash-board',`:host{flex-direction:column;flex:1;min-height:0}.w{display:flex;flex:1;min-height:0}.c{width:1556px;overflow:hidden}.b{display:flex;align-items:flex-start}`,
`<stripe-topbar></stripe-topbar><stripe-nav></stripe-nav><div class="w"><div class="c"><account-header></account-header><div class="b"><side-menu></side-menu><payment-view></payment-view></div></div><tool-rail></tool-rail></div>`);

define('dock-app',`:host{width:57px;flex-direction:column;align-items:center;position:relative;flex:none}span{filter:drop-shadow(0 1px 1px rgba(60,30,10,.35))}i{display:none;width:4.500px;height:4.500px;border-radius:50%;background:#700800;margin-top:11.500px}:host([run]) i{display:block}
b{position:absolute;right:-9px;top:-6.500px;width:27px;height:27px;border-radius:50%;background:#ff4133;color:#fff;font-size:14px;font-weight:400;display:none;align-items:center;justify-content:center;box-shadow:0 1px 2px rgba(0,0,0,.3)}:host([badge]) b{display:flex}`,`<span></span><i></i><b><slot></slot></b>`);
const A=(n,r='run',t='')=>`<dock-app app="${n}" ${r}>${t}</dock-app>`;
define('mac-dock',`:host{position:relative;width:1057.500px;height:87.500px;margin:0 0 0 271px;flex:none;border-radius:23px;border:1px solid rgba(255,215,180,.45);border-top-color:rgba(255,200,180,.6);gap:18.600px;padding:11.300px 0 0 11.700px;
background:linear-gradient(180deg,rgba(130,95,80,.5),rgba(140,90,80,.25) 35%,transparent 70%),linear-gradient(90deg,#b58d84,#f2964f 6%,#ff9f45 16%,#ff8648 31%,#ff9a46 41%,#ff8a48 52%,#ff7250 68%,#ff7a50 81%,#fb9044 89%,#ff9d49);
box-shadow:0 0 38px 2px rgba(0,0,0,.3)}.s{width:15.600px;display:flex;justify-content:center;flex:none}.s i{width:1.500px;height:65px;background:rgba(150,60,0,.65);margin-top:-1px}.tr{margin:-3px 0 0 -1px}`,
A('finder')+A('launchpad','')+A('settings','badge','1')+A('freeform')+'<span class="s"><i></i></span>'+['terminal','chrome','manatee','sublime','postman','slack','firefox','zoom'].map(n=>A(n)).join('')+'<span class="s"><i></i></span><span class="tr">'+A('trash','')+'</span>');
for(const d of document.querySelector('mac-dock').shadowRoot.querySelectorAll('dock-app'))d.shadowRoot.querySelector('span').innerHTML=APPS[d.getAttribute('app')];

customElements.define('ui-icon',class extends HTMLElement{
  connectedCallback(){if(this.shadowRoot)return;this.attachShadow({mode:'open'}).innerHTML=`<style>:host{display:block;flex:none}svg{display:block}</style>${ICONS[this.getAttribute('name')]}`;}
});
/* Single-line label tracked so that its advance equals the w attribute. */
customElements.define('fit-text',class extends HTMLElement{
  connectedCallback(){if(this.shadowRoot)return;
    this.attachShadow({mode:'open'}).innerHTML='<style>:host{display:block;flex:none;width:max-content;white-space:pre}span{display:inline-block}</style><span><slot></slot></span>';
    const s=this.shadowRoot.querySelector('span'),w=+this.getAttribute('w'),n=[...this.textContent].length;
    s.style.letterSpacing=((w-s.getBoundingClientRect().width)/n).toFixed(3)+'px';this.style.width=w+'px';}
});
</script>
</body>
</html>
